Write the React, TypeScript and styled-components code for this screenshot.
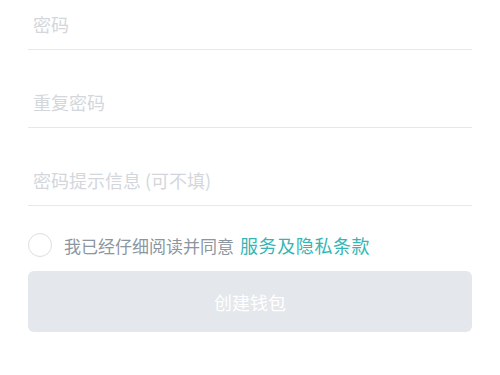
import React, { useState } from 'react'
import styled, { createGlobalStyle } from 'styled-components'

const GlobalStyle = createGlobalStyle`
  html, body {
    margin: 0;
    padding: 0;
    background: #ffffff;
    font-family: "Noto Sans CJK SC", "Noto Sans", sans-serif;
  }
`

const Page = styled.div`
  width: 500px;
  height: 375px;
  overflow: hidden;
  background: #ffffff;
`

// page is scrolled a little, so the first field is cut at the top
const Form = styled.div`
  margin-top: -28px;
  padding: 0 28px;
  display: flex;
  flex-direction: column;
`

const Field = styled.div`
  padding-top: 27px;
  border-bottom: 1px solid #e6e9ec;
`

const Input = styled.input`
  display: block;
  width: 100%;
  height: 50px;
  box-sizing: border-box;
  border: none;
  outline: none;
  padding: 0 0 0 5px;
  font-family: "Noto Sans CJK SC", "Noto Sans", sans-serif;
  font-size: 18px;
  color: #333;
  background: transparent;

  &::placeholder {
    color: #d3d7dc;
  }
`

const AgreeRow = styled.label`
  display: flex;
  align-items: center;
  gap: 12px;
  height: 39px;
  margin-top: 19px;
  cursor: pointer;
`

const Circle = styled.span<{ checked: boolean }>`
  width: 24px;
  height: 24px;
  box-sizing: border-box;
  border-radius: 50%;
  border: 1.5px solid ${(p) => (p.checked ? '#3cbfbf' : '#dadee2')};
  background: ${(p) => (p.checked ? '#3cbfbf' : '#fff')};
  flex-shrink: 0;
`

const AgreeText = styled.span`
  font-size: 17px;
  color: #8c969f;
  white-space: nowrap;
`

const Link = styled.a`
  color: #35b5b5;
  font-size: 18px;
  letter-spacing: 0.6px;
  margin-left: 6px;
  text-decoration: none;
`

const Button = styled.button`
  margin-top: 7px;
  height: 61px;
  border: none;
  border-radius: 6px;
  background: #e4e7eb;
  color: #ffffff;
  font-family: "Noto Sans CJK SC", "Noto Sans", sans-serif;
  font-size: 18px;
  cursor: not-allowed;
`

const App = () => {
  const [agree, setAgree] = useState(false)
  return (
    <Page>
      <GlobalStyle />
      <Form>
        <Field>
          <Input type="password" placeholder="密码" />
        </Field>
        <Field>
          <Input type="password" placeholder="重复密码" />
        </Field>
        <Field>
          <Input placeholder="密码提示信息 (可不填)" />
        </Field>
        <AgreeRow onClick={() => setAgree(!agree)}>
          <Circle checked={agree} />
          <AgreeText>
            我已经仔细阅读并同意
            <Link>服务及隐私条款</Link>
          </AgreeText>
        </AgreeRow>
        <Button disabled>创建钱包</Button>
      </Form>
    </Page>
  )
}

export default App
